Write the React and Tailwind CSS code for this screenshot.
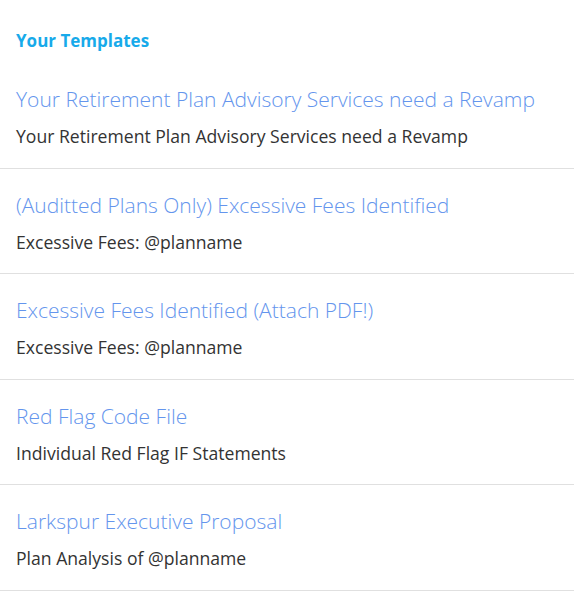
const templates = [
  {
    title: "Your Retirement Plan Advisory Services need a Revamp",
    subject: "Your Retirement Plan Advisory Services need a Revamp",
  },
  { title: "(Auditted Plans Only) Excessive Fees Identified", subject: "Excessive Fees: @planname" },
  { title: "Excessive Fees Identified (Attach PDF!)", subject: "Excessive Fees: @planname" },
  { title: "Red Flag Code File", subject: "Individual Red Flag IF Statements" },
  { title: "Larkspur Executive Proposal", subject: "Plan Analysis of @planname" },
];

export default function App() {
  return (
    <div className="min-h-[600px] bg-white font-['Open_Sans',sans-serif]">
      <h2 className="px-4 pt-[29px] pb-[10px] text-[17px] leading-[24px] font-bold text-[#17aaea]">
        Your Templates
      </h2>
      <ul>
        {templates.map((t, i) => (
          <li key={i} className="border-b border-[#e0e0e0] px-4 pt-[21px] pb-[18.5px]">
            <a href="#" className="block whitespace-nowrap text-[21px] leading-[30px] font-light text-[#6495ed]">
              {t.title}
            </a>
            <p className="mt-[9px] text-[17.6px] leading-[26px] text-[#333333]">{t.subject}</p>
          </li>
        ))}
      </ul>
    </div>
  );
}
